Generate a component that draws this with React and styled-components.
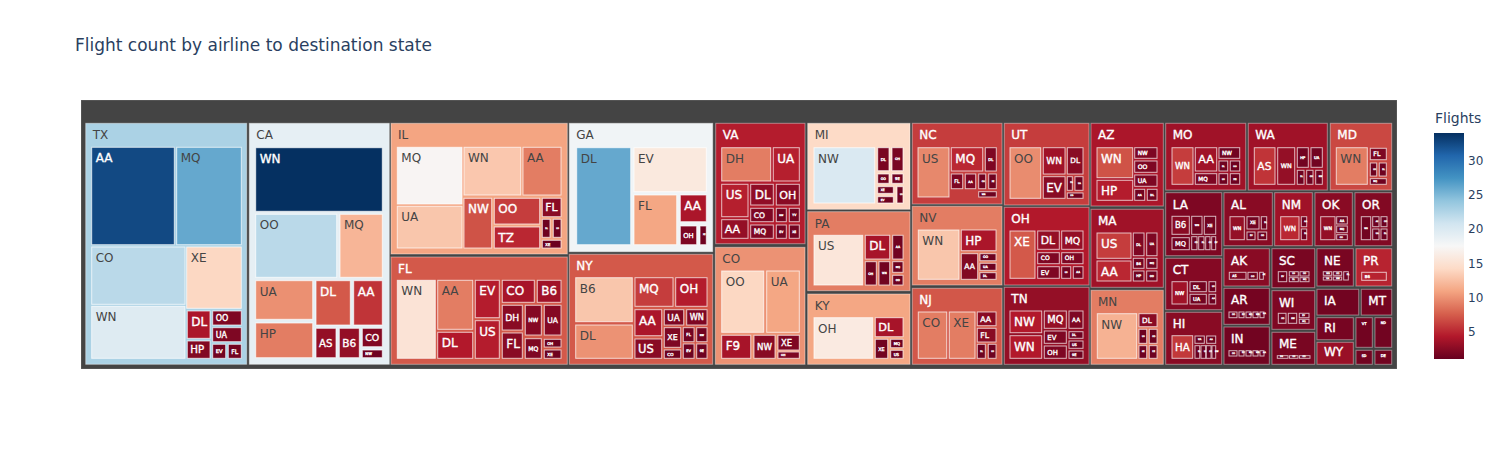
import React from 'react';
import styled, { createGlobalStyle } from 'styled-components';

const GlobalStyle = createGlobalStyle`
  body {
    margin: 0;
    background: #fff;
  }
`;

// colorbrewer RdBu, low = red, high = blue
const RDBU = [
  [103, 0, 31], [178, 24, 43], [214, 96, 77], [244, 165, 130], [253, 219, 199],
  [247, 247, 247], [209, 229, 240], [146, 197, 222], [67, 147, 195], [33, 102, 172], [5, 48, 97],
];
const VMIN = 1;
const VMAX = 34;

const scaleRgb = (v) => {
  const t = Math.max(0, Math.min(1, (v - VMIN) / (VMAX - VMIN))) * 10;
  const i = Math.min(9, Math.floor(t));
  const f = t - i;
  return RDBU[i].map((c, k) => Math.round(c + (RDBU[i + 1][k] - c) * f));
};
const isLight = ([r, g, b]) => (r * 299 + g * 587 + b * 114) / 1000 > 128;

// verdana-ish advance widths (em)
const W = {
  A: .684, B: .686, C: .698, D: .771, E: .632, F: .575, G: .775, H: .751, I: .421, J: .455,
  K: .693, L: .557, M: .843, N: .748, O: .787, P: .603, Q: .787, R: .695, S: .684, T: .616,
  U: .732, V: .684, W: .989, X: .685, Y: .615, Z: .685,
};
const textEm = (s) => [...s].reduce((a, c) => a + (W[c] || .636), 0);

// state: [label, x0, y0, x1, y1, value, children]
const STATES = [
  ['TX', 85.7, 123.3, 246.7, 364.3, 22.8, [
    ['AA', 91.7, 147.3, 174.3, 244.7, 32.5], ['MQ', 176.7, 147.3, 241.3, 244.7, 26],
    ['CO', 91.7, 247, 185, 304.3, 22], ['XE', 186.7, 247, 241.3, 308.3, 14],
    ['WN', 91.7, 306.3, 185, 358.3, 19.7], ['DL', 187.3, 311, 210, 338.3, 4],
    ['OO', 212.7, 311, 241.3, 325, 2], ['UA', 212.7, 327.7, 241.3, 341.7, 2],
    ['HP', 187.3, 341, 210, 358.3, 2.2], ['EV', 212.7, 344.3, 225.7, 358.3, 1.5],
    ['FL', 228.3, 344.3, 241.3, 358.3, 1.5],
  ]],
  ['CA', 249.3, 123.3, 389.3, 364.3, 19, [
    ['WN', 255.7, 147.7, 382.3, 211.3, 34], ['OO', 255.7, 214.3, 336.7, 277.3, 22],
    ['MQ', 340, 214.3, 382.3, 277.3, 11.9], ['UA', 255.7, 280.7, 312.7, 319.3, 9.9],
    ['HP', 255.7, 323, 312.7, 357.7, 9], ['DL', 316, 280.7, 350.3, 325, 7.3],
    ['AA', 353.7, 280.7, 382.3, 325, 5.6], ['AS', 316, 328.3, 336, 357.7, 3],
    ['B6', 339.3, 328.3, 359.3, 357.7, 3], ['CO', 362.3, 328.3, 382.3, 346.7, 2.2],
    ['NW', 362.3, 350, 382.3, 357.7, 1.3],
  ]],
  ['IL', 391, 123.3, 567.3, 254, 10.9, [
    ['MQ', 397.3, 147.3, 462, 204, 17.2], ['UA', 397.3, 206.3, 462, 248, 12.9],
    ['WN', 464, 147.3, 520.7, 195, 13], ['AA', 523, 147.3, 561, 195, 9],
    ['NW', 464, 198.3, 491.7, 248, 7], ['OO', 494.3, 198.3, 539.7, 224, 6],
    ['TZ', 494.3, 227, 539.7, 248, 5], ['FL', 542.3, 198.3, 561, 216.7, 2.5],
    ['DL', 542.3, 219.3, 550, 237.3, 1.3], ['US', 553.3, 219.3, 561, 237.3, 1.3],
    ['XE', 542.3, 240.3, 561, 248, 1.2],
  ]],
  ['FL', 391, 257, 567.3, 364.3, 7.3, [
    ['WN', 397.3, 280.3, 435.3, 358.3, 15.2], ['AA', 437.7, 280.3, 472.7, 329.3, 9],
    ['DL', 437.7, 332.3, 472.7, 358.3, 4.3], ['EV', 475.3, 280.3, 499.3, 317.7, 4.5],
    ['US', 475.3, 320.7, 499.3, 358.3, 4.5], ['CO', 502.3, 280.3, 534.3, 302.3, 3.8],
    ['B6', 537.3, 280.3, 561, 302.3, 3.5], ['DH', 502.3, 305.3, 522.3, 330, 2.5],
    ['NW', 525.3, 305.3, 541.3, 335, 2.3], ['UA', 544.3, 305.3, 561, 335, 2.3],
    ['FL', 502.3, 333, 522.3, 358.3, 2.5], ['MQ', 525.3, 338.7, 541.3, 358.3, 2],
    ['OH', 544.3, 339.3, 561, 347, 1.3], ['XE', 544.3, 350, 561, 358.3, 1.3],
  ]],
  ['GA', 569.3, 123.3, 712.7, 251.7, 18.1, [
    ['DL', 576.7, 147.7, 630.7, 244.7, 26], ['EV', 634, 147.7, 706.3, 191.7, 15.8],
    ['FL', 634, 195, 676.7, 244.7, 11], ['AA', 680.3, 195, 706.3, 221.7, 4],
    ['OH', 680.3, 226, 696.7, 244.7, 2], ['XE', 700, 226, 706.3, 244.7, 1.3],
  ]],
  ['NY', 569.3, 254.3, 712.7, 364.3, 7.3, [
    ['B6', 575.7, 277.7, 632.3, 321.7, 12.9], ['DL', 575.7, 325, 632.3, 358.3, 10],
    ['MQ', 635, 277.7, 673, 306.3, 6], ['OH', 675.7, 277.7, 707, 306.3, 4.5],
    ['AA', 635, 309.7, 661.7, 335.7, 4], ['US', 635, 339, 661.7, 358.3, 2.5],
    ['UA', 664.3, 309.7, 683.7, 325, 2], ['WN', 686.7, 309.7, 707, 325, 2],
    ['XE', 664.3, 327.7, 680.7, 347.3, 2], ['FL', 683.3, 327.7, 694, 341.7, 1.5],
    ['NW', 696.7, 327.7, 707, 341.7, 1.5], ['CO', 664.3, 350, 680.7, 358.3, 1.3],
    ['EV', 683.3, 344, 694, 358.3, 1.3], ['9E', 696.7, 344, 707, 358.3, 1.3],
  ]],
  ['VA', 715.7, 123.3, 805, 243.7, 4.5, [
    ['DH', 721.7, 147.7, 770.7, 181, 9], ['UA', 773.3, 147.7, 799.3, 181, 4.6],
    ['US', 721.7, 184.3, 748, 216.7, 4.6], ['AA', 721.7, 219.7, 748, 238.3, 3],
    ['DL', 750.7, 184.3, 773.3, 205, 2.8], ['OH', 776.3, 184.3, 799.3, 205, 2.5],
    ['CO', 750.7, 208.3, 773.3, 221.7, 2], ['MQ', 750.7, 225, 773.3, 238.3, 2],
    ['NW', 776.3, 208.3, 786.3, 221.7, 1.5], ['YV', 789.3, 208.3, 799.3, 221.7, 1.5],
    ['EV', 776.3, 225, 786.3, 238.3, 1.5], ['XE', 789.3, 225, 799.3, 238.3, 1.5],
  ]],
  ['CO', 715.3, 247.3, 805, 364.3, 10, [
    ['OO', 721.7, 271, 763.7, 332.3, 14], ['UA', 766.7, 271, 799.3, 332.3, 11],
    ['F9', 721.7, 335.3, 750.7, 358.3, 3.8], ['NW', 754, 335.3, 775, 358.3, 2.5],
    ['XE', 778, 335.3, 799.3, 350, 2], ['OH', 778, 352, 799.3, 358.3, 2],
  ]],
  ['MI', 807.7, 123.3, 910, 209.3, 14.2, [
    ['NW', 814, 147.7, 874.7, 203, 20], ['DL', 877.7, 147.7, 889, 170.7, 1.8],
    ['OH', 892, 147.7, 903, 170.7, 1.8], ['OO', 877.7, 174, 889, 183.3, 1.5],
    ['9E', 892, 174, 903, 183.3, 1.5], ['XE', 877.7, 186.7, 893.3, 193.3, 1.3],
    ['EV', 877.7, 196.7, 893.3, 203, 1.3], ['US', 897, 186.7, 903, 203, 1.3],
  ]],
  ['PA', 807.7, 211.7, 910, 290.7, 9, [
    ['US', 814, 235.3, 862.7, 285, 15.5], ['DL', 865.3, 235.3, 889.7, 259, 3.8],
    ['AA', 892.7, 235.3, 903, 259, 1.5], ['OH', 865.3, 261.7, 876.3, 285, 1.5],
    ['WN', 879, 261.7, 889.7, 285, 1.5], ['MQ', 892.7, 261.7, 903, 272.3, 1.3],
    ['OO', 892.7, 275.3, 903, 285, 1.3],
  ]],
  ['KY', 807.7, 294, 910, 364.3, 11, [
    ['OH', 814, 317.7, 872.7, 358.3, 16], ['DL', 875.3, 317.7, 903, 336.7, 3.8],
    ['XE', 875.3, 339.3, 887.7, 358.3, 1.5], ['MQ', 890.7, 339.3, 903, 347.7, 1.3],
    ['US', 890.7, 350.3, 903, 358.3, 1.3],
  ]],
  ['NC', 912.3, 123.3, 1002, 204, 6, [
    ['US', 918, 147.7, 949, 197, 9.5], ['MQ', 951.3, 147.7, 982.7, 171, 5],
    ['DL', 985.3, 147.7, 996.3, 171, 2], ['FL', 951.3, 174, 962.7, 188.7, 2],
    ['AA', 965.3, 174, 975.7, 188.7, 2], ['OH', 978.7, 174, 985.7, 188.7, 1.3],
    ['XE', 988.7, 174, 996.3, 188.7, 1.3], ['WN', 978.7, 191.7, 996.3, 197, 1.3],
  ]],
  ['NV', 912.3, 206.3, 1002, 285, 9, [
    ['WN', 918.3, 230, 959, 279.3, 12.9], ['HP', 961.3, 230, 996, 250.7, 4],
    ['AA', 961.3, 253.7, 977.7, 279.3, 2.2], ['OO', 980, 253.7, 996, 260.7, 1.3],
    ['UA', 980, 263.3, 996, 270.3, 1.3], ['DL', 980, 272.7, 996, 279.3, 1.3],
  ]],
  ['NJ', 912.3, 288.3, 1002, 364.3, 7.2, [
    ['CO', 918.3, 312, 946.7, 358.3, 9], ['XE', 949.3, 312, 975, 358.3, 9],
    ['AA', 977.3, 312, 996, 325.7, 2.5], ['FL', 977.3, 328.3, 996, 342, 2.5],
    ['DL', 977.3, 344.3, 985.3, 358.3, 1.3], ['US', 988.3, 344.3, 996, 358.3, 1.3],
  ]],
  ['UT', 1004.3, 123.3, 1089, 205, 6, [
    ['OO', 1010, 147.7, 1040.7, 198.3, 9.7], ['WN', 1043.3, 147.7, 1065, 174, 3.5],
    ['DL', 1067.3, 147.7, 1083, 174, 2.5], ['EV', 1043.3, 176.7, 1065, 198.3, 2.5],
    ['F9', 1067.3, 176.7, 1072.3, 190.3, 1.3], ['UA', 1075, 176.7, 1083, 190.3, 1.3],
    ['US', 1067.3, 193, 1083, 198.3, 1.3],
  ]],
  ['OH', 1004.3, 207.3, 1089, 285, 4.3, [
    ['XE', 1010, 231, 1035, 278.3, 7.3], ['DL', 1037.7, 231, 1059.3, 249.3, 3],
    ['MQ', 1061.7, 231, 1083, 249.3, 3], ['CO', 1037.7, 252.7, 1059.3, 263.7, 2],
    ['OH', 1061.7, 252.7, 1083, 263.7, 2], ['EV', 1037.7, 266.7, 1059.3, 278.3, 2],
    ['US', 1061.7, 266.7, 1070.7, 278.3, 1.5], ['AA', 1073.3, 266.7, 1083, 278.3, 1.5],
  ]],
  ['TN', 1004.3, 287.3, 1089, 364.3, 3, [
    ['NW', 1010, 311, 1041.7, 332.7, 4.3], ['WN', 1010, 335.7, 1041.7, 358.3, 4.3],
    ['MQ', 1044.3, 311, 1066.3, 328.3, 3], ['AA', 1069, 311, 1083, 328.3, 2],
    ['EV', 1044.3, 331, 1066.3, 343.3, 2], ['OH', 1044.3, 346, 1066.3, 358.3, 2],
    ['DL', 1069, 331.7, 1083, 338.3, 1.3], ['US', 1069, 341, 1083, 348.3, 1.3],
    ['9E', 1069, 351, 1083, 358.3, 1.3],
  ]],
  ['AZ', 1091, 123.3, 1163.3, 206, 4, [
    ['WN', 1097, 147.7, 1132.7, 177.7, 7], ['HP', 1097, 180.3, 1132.7, 200.3, 4.5],
    ['NW', 1134.7, 147.7, 1157, 158.3, 2], ['OO', 1134.7, 161, 1157, 172.3, 2],
    ['UA', 1134.7, 175, 1157, 186.3, 2], ['AA', 1134.7, 189.3, 1144.7, 200.3, 1.5],
    ['DL', 1147.3, 189.3, 1157, 200.3, 1.5],
  ]],
  ['MA', 1091, 209.3, 1163.3, 287.3, 3.5, [
    ['US', 1097, 233, 1131, 258.3, 6], ['AA', 1097, 261, 1131, 281, 5],
    ['DL', 1133.3, 233, 1144, 255.7, 2], ['UA', 1146.7, 233, 1157, 255.7, 2],
    ['B6', 1133.3, 258.3, 1144, 268.3, 1.5], ['MQ', 1146.7, 258.3, 1157, 268.3, 1.5],
    ['HP', 1133.3, 271, 1144, 281, 1.5], ['OO', 1146.7, 271, 1157, 281, 1.5],
  ]],
  ['MN', 1091, 290.3, 1163.3, 364.3, 9, [
    ['NW', 1097.3, 313.7, 1136.7, 358.3, 11.7], ['DL', 1139, 313.7, 1157, 326.7, 2.5],
    ['US', 1139, 329.3, 1146.7, 343.3, 1.3], ['OO', 1149.3, 329.3, 1157, 343.3, 1.3],
    ['9E', 1139, 345.7, 1146.7, 358.3, 1.3], ['XE', 1149.3, 345.7, 1157, 358.3, 1.3],
  ]],
  ['MO', 1165.7, 123.3, 1245.7, 190, 3.5, [
    ['WN', 1172, 147.7, 1193, 184.3, 6], ['AA', 1195.3, 147.7, 1216.7, 171, 3.5],
    ['MQ', 1195.3, 173.7, 1216.7, 184.3, 2], ['NW', 1219, 147.7, 1239.7, 158.3, 1.5],
    ['DL', 1219, 161, 1227.7, 171, 1.3], ['OO', 1230.3, 161, 1239.7, 171, 1.3],
    ['US', 1219, 173.7, 1227.7, 184.3, 1.3], ['XE', 1230.3, 173.7, 1239.7, 184.3, 1.3],
  ]],
  ['WA', 1248.3, 123.3, 1327.3, 190, 3.5, [
    ['AS', 1254.3, 147.7, 1275, 184.3, 5.6], ['WN', 1277.7, 147.7, 1294.7, 184.3, 3],
    ['HP', 1297.3, 147.7, 1308.3, 167.3, 1.5], ['UA', 1311, 147.7, 1322.3, 167.3, 1.5],
    ['DL', 1297.3, 170.3, 1304, 184.3, 1.3], ['OO', 1306.7, 170.3, 1313, 184.3, 1.3],
    ['NW', 1315.7, 170.3, 1322.3, 184.3, 1.3],
  ]],
  ['MD', 1330.3, 123.3, 1391.7, 190, 6.5, [
    ['WN', 1336.3, 147.7, 1367.3, 184.3, 9], ['FL', 1370.3, 148.3, 1386.3, 159.7, 2],
    ['US', 1370.3, 163, 1376.7, 176, 1.3], ['DL', 1379.3, 163, 1386.3, 176, 1.3],
    ['MQ', 1370.3, 178.7, 1386.3, 184.3, 1.3],
  ]],
  ['LA', 1165.7, 192.7, 1221.7, 255.7, 2, [
    ['B6', 1172, 216.3, 1189.3, 234.3, 2.5], ['WN', 1191.7, 216.3, 1202, 234.3, 1.5],
    ['XE', 1204.3, 216.3, 1215.7, 234.3, 1.5], ['MQ', 1172, 237.7, 1189.3, 249.7, 1.5],
    ['CO', 1191.7, 236.7, 1197, 249.7, 1.2], ['DL', 1198.7, 236.7, 1204, 249.7, 1.2],
    ['OO', 1205.7, 236.7, 1210, 249.7, 1.2], ['EV', 1211.7, 236.7, 1215.7, 249.7, 1.2],
  ]],
  ['CT', 1165.7, 258.3, 1221.7, 309.7, 2.3, [
    ['NW', 1172, 281.7, 1187.3, 304, 3.5], ['DL', 1190, 281.7, 1206.3, 291.7, 1.5],
    ['UA', 1190, 294.3, 1206.3, 304, 1.5], ['US', 1209, 281.7, 1215.7, 291.7, 1.2],
    ['AA', 1209, 294.3, 1215.7, 304, 1.2],
  ]],
  ['HI', 1165.7, 312.3, 1221.7, 364.3, 2.5, [
    ['HA', 1172, 335.7, 1192.7, 358.3, 5.8], ['UA', 1195, 336, 1204.3, 343.3, 1.3],
    ['AA', 1206.7, 336, 1215.7, 343.3, 1.3], ['DL', 1195, 345.7, 1199.7, 358.3, 1.2],
    ['US', 1201, 345.7, 1205.7, 358.3, 1.2], ['CO', 1206.3, 345.7, 1211, 358.3, 1.2],
    ['NW', 1212, 345.7, 1215.7, 358.3, 1.2],
  ]],
  ['AL', 1224, 192.7, 1272.3, 245.7, 2.5, [
    ['WN', 1230, 216.7, 1244.3, 239.7, 3], ['XE', 1247, 216.7, 1259, 229, 1.5],
    ['DL', 1261.3, 216.7, 1266.7, 229, 1.3], ['EV', 1247, 232, 1255, 239.7, 1.2],
    ['OO', 1258, 232, 1266.7, 239.7, 1.2],
  ]],
  ['NM', 1274.7, 192.7, 1312.3, 245.7, 3.5, [
    ['WN', 1280.7, 216.7, 1299, 239.7, 5], ['AA', 1301.3, 216.7, 1306.7, 226.7, 1.3],
    ['DL', 1301.3, 229, 1306.7, 239.7, 1.3],
  ]],
  ['OK', 1315, 192.7, 1352.3, 245.7, 2.5, [
    ['WN', 1320.7, 216.7, 1335, 239.7, 3], ['AA', 1336.7, 216.7, 1347.3, 224, 1.3],
    ['MQ', 1336.7, 226, 1347.3, 232.7, 1.3], ['OO', 1336.7, 234.7, 1347.3, 239.7, 1.3],
  ]],
  ['OR', 1355, 192.7, 1391.7, 245.7, 2.2, [
    ['WN', 1361.3, 216.7, 1370.7, 239.7, 1.5], ['AS', 1372.7, 216.7, 1379, 226.7, 1.2],
    ['OO', 1381, 216.7, 1387, 226.7, 1.2], ['UA', 1372.7, 229, 1379, 239.7, 1.2],
    ['DL', 1381, 229, 1387, 239.7, 1.2],
  ]],
  ['AK', 1224, 248.7, 1269.3, 286, 2.5, [
    ['AS', 1229.3, 272.3, 1246, 279.3, 2], ['OO', 1248, 272.3, 1257.3, 279.3, 1.3],
    ['AK', 1259.7, 272.3, 1263.3, 279.3, 1.2],
  ]],
  ['SC', 1272, 248.7, 1314.7, 287.7, 1.8, [
    ['EV', 1278.3, 271.7, 1286.7, 281.7, 1.3], ['US', 1289.3, 271.7, 1298.3, 276, 1.2],
    ['DL', 1289.3, 277.7, 1298.3, 281.7, 1.2], ['OO', 1300, 271.7, 1309, 276, 1.2],
    ['MQ', 1300, 277.7, 1309, 281.7, 1.2],
  ]],
  ['NE', 1317, 248.7, 1353.3, 286, 1.8, [
    ['WN', 1323.3, 271.7, 1331.7, 275.3, 1.2], ['UA', 1323.3, 277, 1331.7, 280, 1.2],
    ['OO', 1333.3, 271.7, 1341.7, 275.3, 1.2], ['NW', 1333.3, 277, 1341.7, 280, 1.2],
    ['DL', 1343.7, 271.7, 1348.3, 280, 1.2],
  ]],
  ['PR', 1356, 248.7, 1391.7, 286, 4.8, [
    ['B6', 1361.7, 272.3, 1386.3, 280.3, 4.8],
  ]],
  ['AR', 1224, 288.3, 1269.3, 324.3, 1.6, [
    ['OO', 1229, 312, 1237, 317.7, 1.2], ['EV', 1239, 312, 1244, 317.7, 1.2],
    ['MQ', 1246, 312, 1251, 317.7, 1.2], ['WN', 1253, 312, 1258, 317.7, 1.2],
    ['AA', 1260, 312, 1264, 317.7, 1.2],
  ]],
  ['WI', 1272, 290.7, 1314.7, 329.3, 2, [
    ['OO', 1278.3, 313.3, 1286, 323.3, 1.5], ['NW', 1288.3, 313.3, 1296.7, 323.3, 1.5],
    ['EV', 1299.3, 313.3, 1309, 317.7, 1.2], ['MQ', 1299.3, 319.3, 1309, 323.3, 1.2],
  ]],
  ['IA', 1317, 289.3, 1358.7, 315, 1.5, []],
  ['MT', 1361.3, 289.3, 1391.7, 315, 1.6, []],
  ['RI', 1317, 317.7, 1353.3, 339.7, 1.7, []],
  ['WY', 1317, 342.3, 1353.3, 364.3, 3.2, []],
  ['VT', 1356, 317.7, 1372.3, 347.3, 1.5, []],
  ['ND', 1375, 317.7, 1391.7, 347.3, 1.5, []],
  ['SD', 1356, 350.3, 1372.3, 364.3, 1.5, []],
  ['DE', 1375, 350.3, 1391.7, 364.3, 1.5, []],
  ['IN', 1224, 327, 1269.3, 364.3, 1.5, [
    ['OO', 1229, 350.7, 1237, 356, 1.2], ['EV', 1239, 350.7, 1244, 356, 1.2],
    ['MQ', 1246, 350.7, 1251, 356, 1.2], ['WN', 1253, 350.7, 1258, 356, 1.2],
    ['AA', 1260, 350.7, 1264, 356, 1.2],
  ]],
  ['ME', 1272, 332.3, 1314.7, 364.3, 1.8, [
    ['B6', 1277.3, 355.7, 1288, 358.3, 1.2], ['US', 1289.5, 355.7, 1298, 358.3, 1.2],
    ['OO', 1299.5, 355.7, 1310, 358.3, 1.2],
  ]],
];

const TICKS = [5, 10, 15, 20, 25, 30];
const CB = { x: 1434, top: 133, bottom: 359, w: 30 };
const tickY = (v) => CB.bottom - ((v - VMIN) / (VMAX - VMIN)) * (CB.bottom - CB.top);

const FONT = `"DejaVu Sans", Verdana, "Liberation Sans", sans-serif`;

const Figure = styled.div`
  width: 1503px;
  height: 450px;
  font-family: ${FONT};
  overflow: hidden;
`;

const Title = styled.h1`
  box-sizing: border-box;
  height: 100px;
  margin: 0;
  padding: 35px 0 0 75px;
  font-size: 17px;
  line-height: 20px;
  font-weight: normal;
  color: #2a3f5f;
`;

const ChartRow = styled.div`
  display: flex;
  align-items: flex-start;
  padding-left: 81px;
`;

const TreemapSvg = styled.svg`
  display: block;
  flex: none;
`;

const ColorbarSvg = styled.svg`
  display: block;
  flex: none;
`;

const Tile = styled.rect`
  stroke: ${(p) => (p.$level === 'root' ? 'rgba(255,255,255,0.18)' : p.$level === 'state' ? 'rgba(255,255,255,0.4)' : 'rgba(255,255,255,0.7)')};
  stroke-width: 1;
`;

const Label = styled.text`
  font-family: ${FONT};
  fill: ${(p) => (p.$dark ? '#444' : '#fff')};
  stroke: ${(p) => (p.$dark ? 'none' : '#fff')};
  stroke-width: 0.35;
  white-space: pre;
`;

const AxisText = styled.text`
  font-family: ${FONT};
  fill: #2a3f5f;
`;

const placeLabel = (label, x0, y0, x1, y1, isState) => {
  const w = x1 - x0;
  const h = y1 - y0;
  const em = textEm(label);
  if (isState) {
    const fs = Math.min(12, (w - 8) / em, (h - 2) / 1.5);
    if (fs >= 12) return { x: x0 + 7, y: y0 + Math.min(16, h / 2 + 3), fs: 12 };
    const small = Math.min(fs, ((w - 8) / em) * 0.6);
    return { x: x0 + (w - em * small) / 2, y: y0 + 3 + small, fs: small };
  }
  const fs = Math.min(12, (w - 6) / em, (h - 2) / 1.5);
  if (fs >= 12) return { x: x0 + 4, y: y0 + 15, fs: 12 };
  return { x: x0 + 3, y: (y0 + y1) / 2 + fs * 0.36, fs: Math.max(fs, 2) };
};

const Node = ({ label, x0, y0, x1, y1, v, isState }) => {
  const rgb = scaleRgb(v);
  const t = placeLabel(label, x0, y0, x1, y1, isState);
  return (
    <g>
      <Tile
        $level={isState ? 'state' : 'leaf'}
        x={x0}
        y={y0}
        width={x1 - x0}
        height={y1 - y0}
        fill={`rgb(${rgb.join(',')})`}
      />
      <Label $dark={isLight(rgb)} x={t.x} y={t.y} fontSize={t.fs}>
        {label}
      </Label>
    </g>
  );
};

const Treemap = () => (
  <TreemapSvg width={1316} height={269} viewBox="81 100 1316 269">
    <Tile $level="root" x={81} y={100} width={1316} height={269} fill="#444" />
    {STATES.map(([label, x0, y0, x1, y1, v, kids]) => (
      <g key={label}>
        <Node label={label} x0={x0} y0={y0} x1={x1} y1={y1} v={v} isState />
        {kids.map(([k, a, b, c, d, kv], i) => (
          <Node key={k + i} label={k} x0={a} y0={b} x1={c} y1={d} v={kv} />
        ))}
      </g>
    ))}
  </TreemapSvg>
);

const Colorbar = () => (
  <ColorbarSvg width={106} height={269} viewBox="1397 100 106 269">
    <defs>
      <linearGradient id="rdbu" x1="0" y1="1" x2="0" y2="0">
        {RDBU.map((c, i) => (
          <stop key={i} offset={i / 10} stopColor={`rgb(${c.join(',')})`} />
        ))}
      </linearGradient>
    </defs>
    <AxisText x={1435} y={123} fontSize={14}>Flights</AxisText>
    <rect x={CB.x} y={CB.top} width={CB.w} height={CB.bottom - CB.top} fill="url(#rdbu)" />
    {TICKS.map((v) => (
      <AxisText key={v} x={1468} y={tickY(v) + 4.4} fontSize={12}>
        {v}
      </AxisText>
    ))}
  </ColorbarSvg>
);

export default function App() {
  return (
    <>
      <GlobalStyle />
      <Figure>
        <Title>Flight count by airline to destination state</Title>
        <ChartRow>
          <Treemap />
          <Colorbar />
        </ChartRow>
      </Figure>
    </>
  );
}
